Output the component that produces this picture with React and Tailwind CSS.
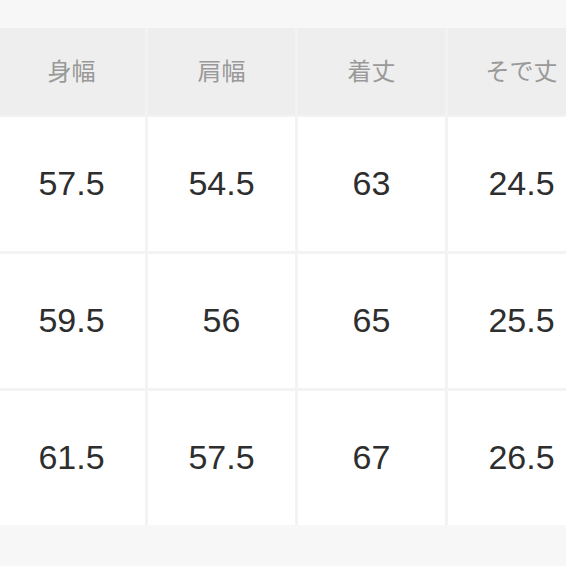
import React from "react";

const headers = ["身幅", "肩幅", "着丈", "そで丈"];
const rows = [
  ["57.5", "54.5", "63", "24.5"],
  ["59.5", "56", "65", "25.5"],
  ["61.5", "57.5", "67", "26.5"],
];

export default function App() {
  return (
    <div
      className="w-[566px] h-[566px] overflow-hidden bg-[#f7f7f7] pt-[28px]"
      style={{ fontFamily: '"Liberation Sans", "Noto Sans CJK JP", sans-serif' }}
    >
      <div className="ml-[-2px] w-[597px] flex flex-col gap-[2px] bg-[#f3f3f3]">
        {/* header */}
        <div className="grid grid-cols-[147px_147px_147px_147px] gap-[3px] bg-[#f2f2f2]">
          {headers.map((h) => (
            <div
              key={h}
              className="h-[87px] bg-[#eeeeee] flex items-center justify-center text-[24px] text-[#999999]"
            >
              {h}
            </div>
          ))}
        </div>

        {/* body */}
        <div className="flex flex-col gap-[3px]">
          {rows.map((r, i) => (
            <div key={i} className="grid grid-cols-[147px_147px_147px_147px] gap-[3px]">
              {r.map((v, j) => (
                <div
                  key={j}
                  className="h-[134px] bg-white flex items-center justify-center pb-[2px] text-[34px] text-[#2e2e2e]"
                >
                  {v}
                </div>
              ))}
            </div>
          ))}
        </div>
      </div>
    </div>
  );
}
